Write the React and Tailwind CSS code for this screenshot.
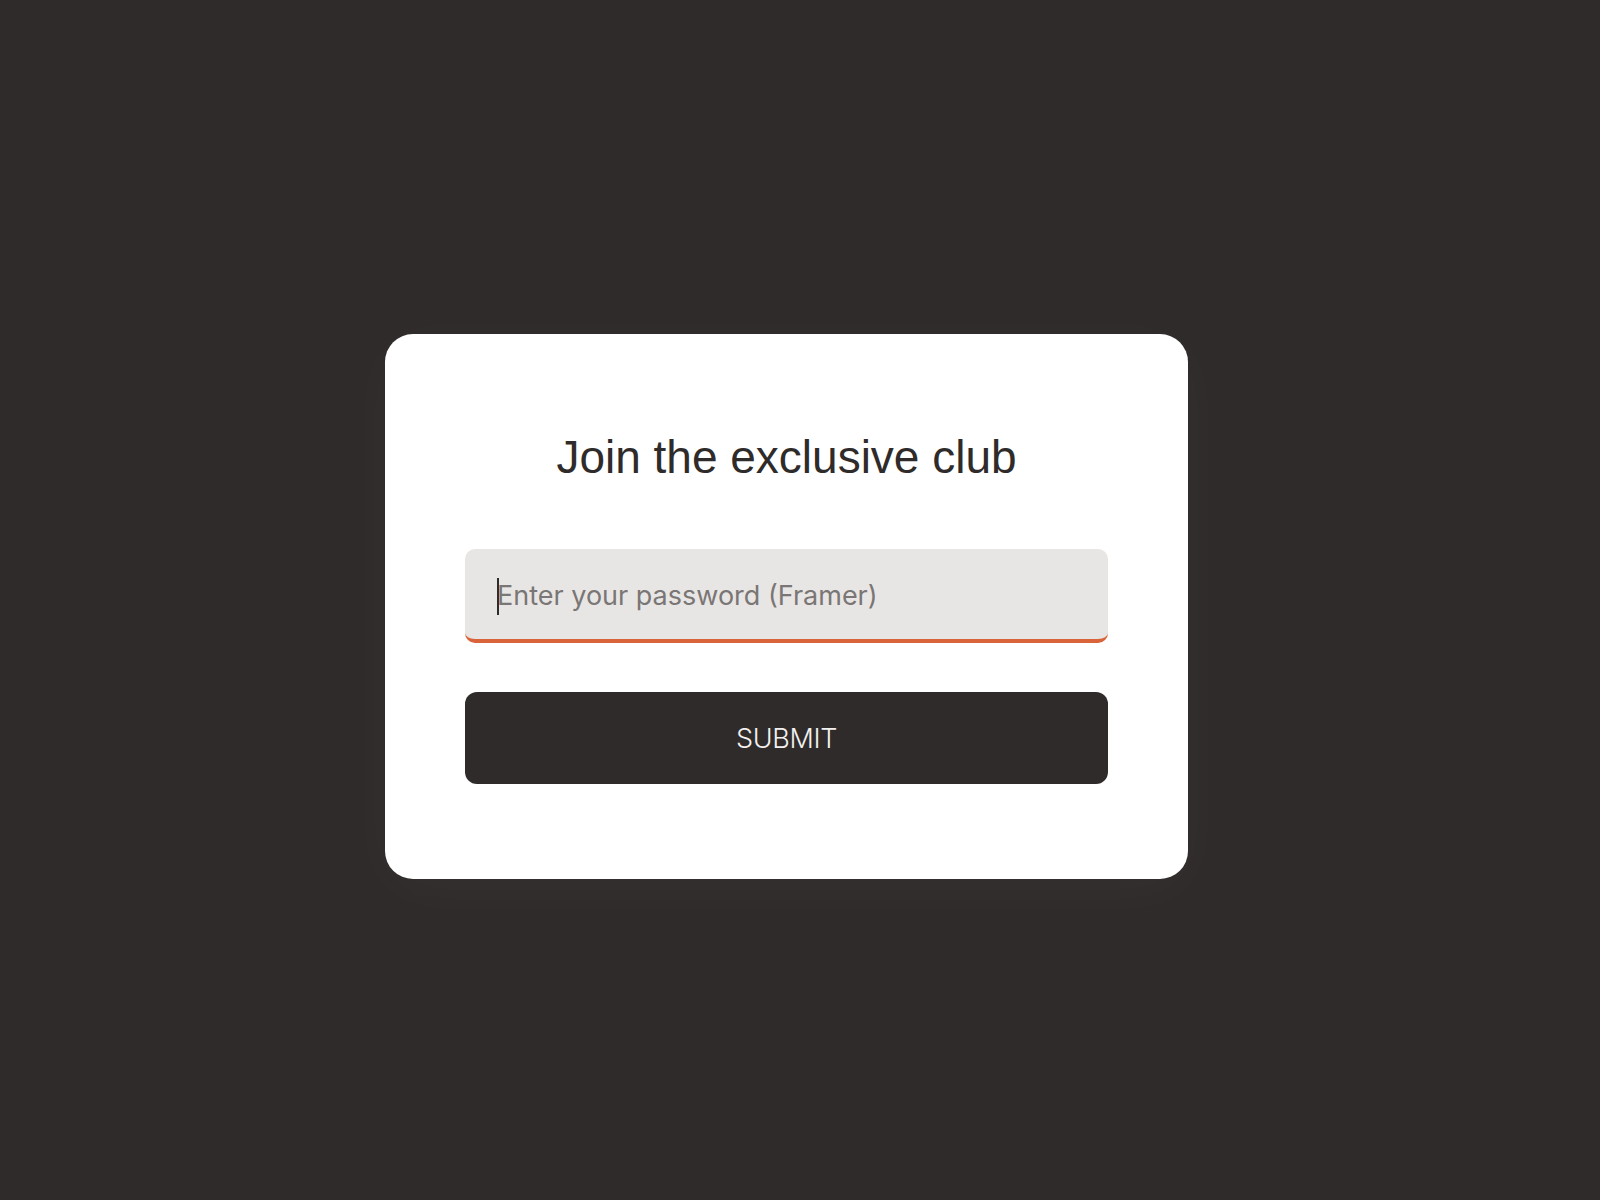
export default function App() {
  return (
    <div className="min-h-screen bg-[#2f2b2a] flex items-center justify-center pr-[27px] pt-[13px]">
      <div className="w-[803px] bg-white rounded-[28px] px-[80px] pt-[96px] pb-[95px] shadow-[0_10px_60px_rgba(255,255,255,0.03)]">
        <h1 className="text-center text-[46px] leading-[1.2] text-[#2f2b2a] font-['Liberation_Sans',Arial,sans-serif]">
          Join the exclusive club
        </h1>

        {/* password field, shown focused with caret */}
        <div className="mt-[64px] h-[94px] bg-[#e8e6e4] rounded-[10px] border-b-4 border-[#d9643a] flex items-center pl-[32px] pt-[4px] font-['Inter',sans-serif]">
          <span className="w-[2px] h-[37px] bg-[#2f2b2a]" />
          <span className="-ml-[2px] text-[27px] text-[#7a7675]">
            Enter your password (Framer)
          </span>
        </div>

        <button className="mt-[49px] w-full h-[92px] pt-[3px] bg-[#2f2b2a] rounded-[12px] text-[27px] font-light text-[#f3f1ef] font-['Inter',sans-serif] tracking-[-0.3px]">
          SUBMIT
        </button>
      </div>
    </div>
  )
}
